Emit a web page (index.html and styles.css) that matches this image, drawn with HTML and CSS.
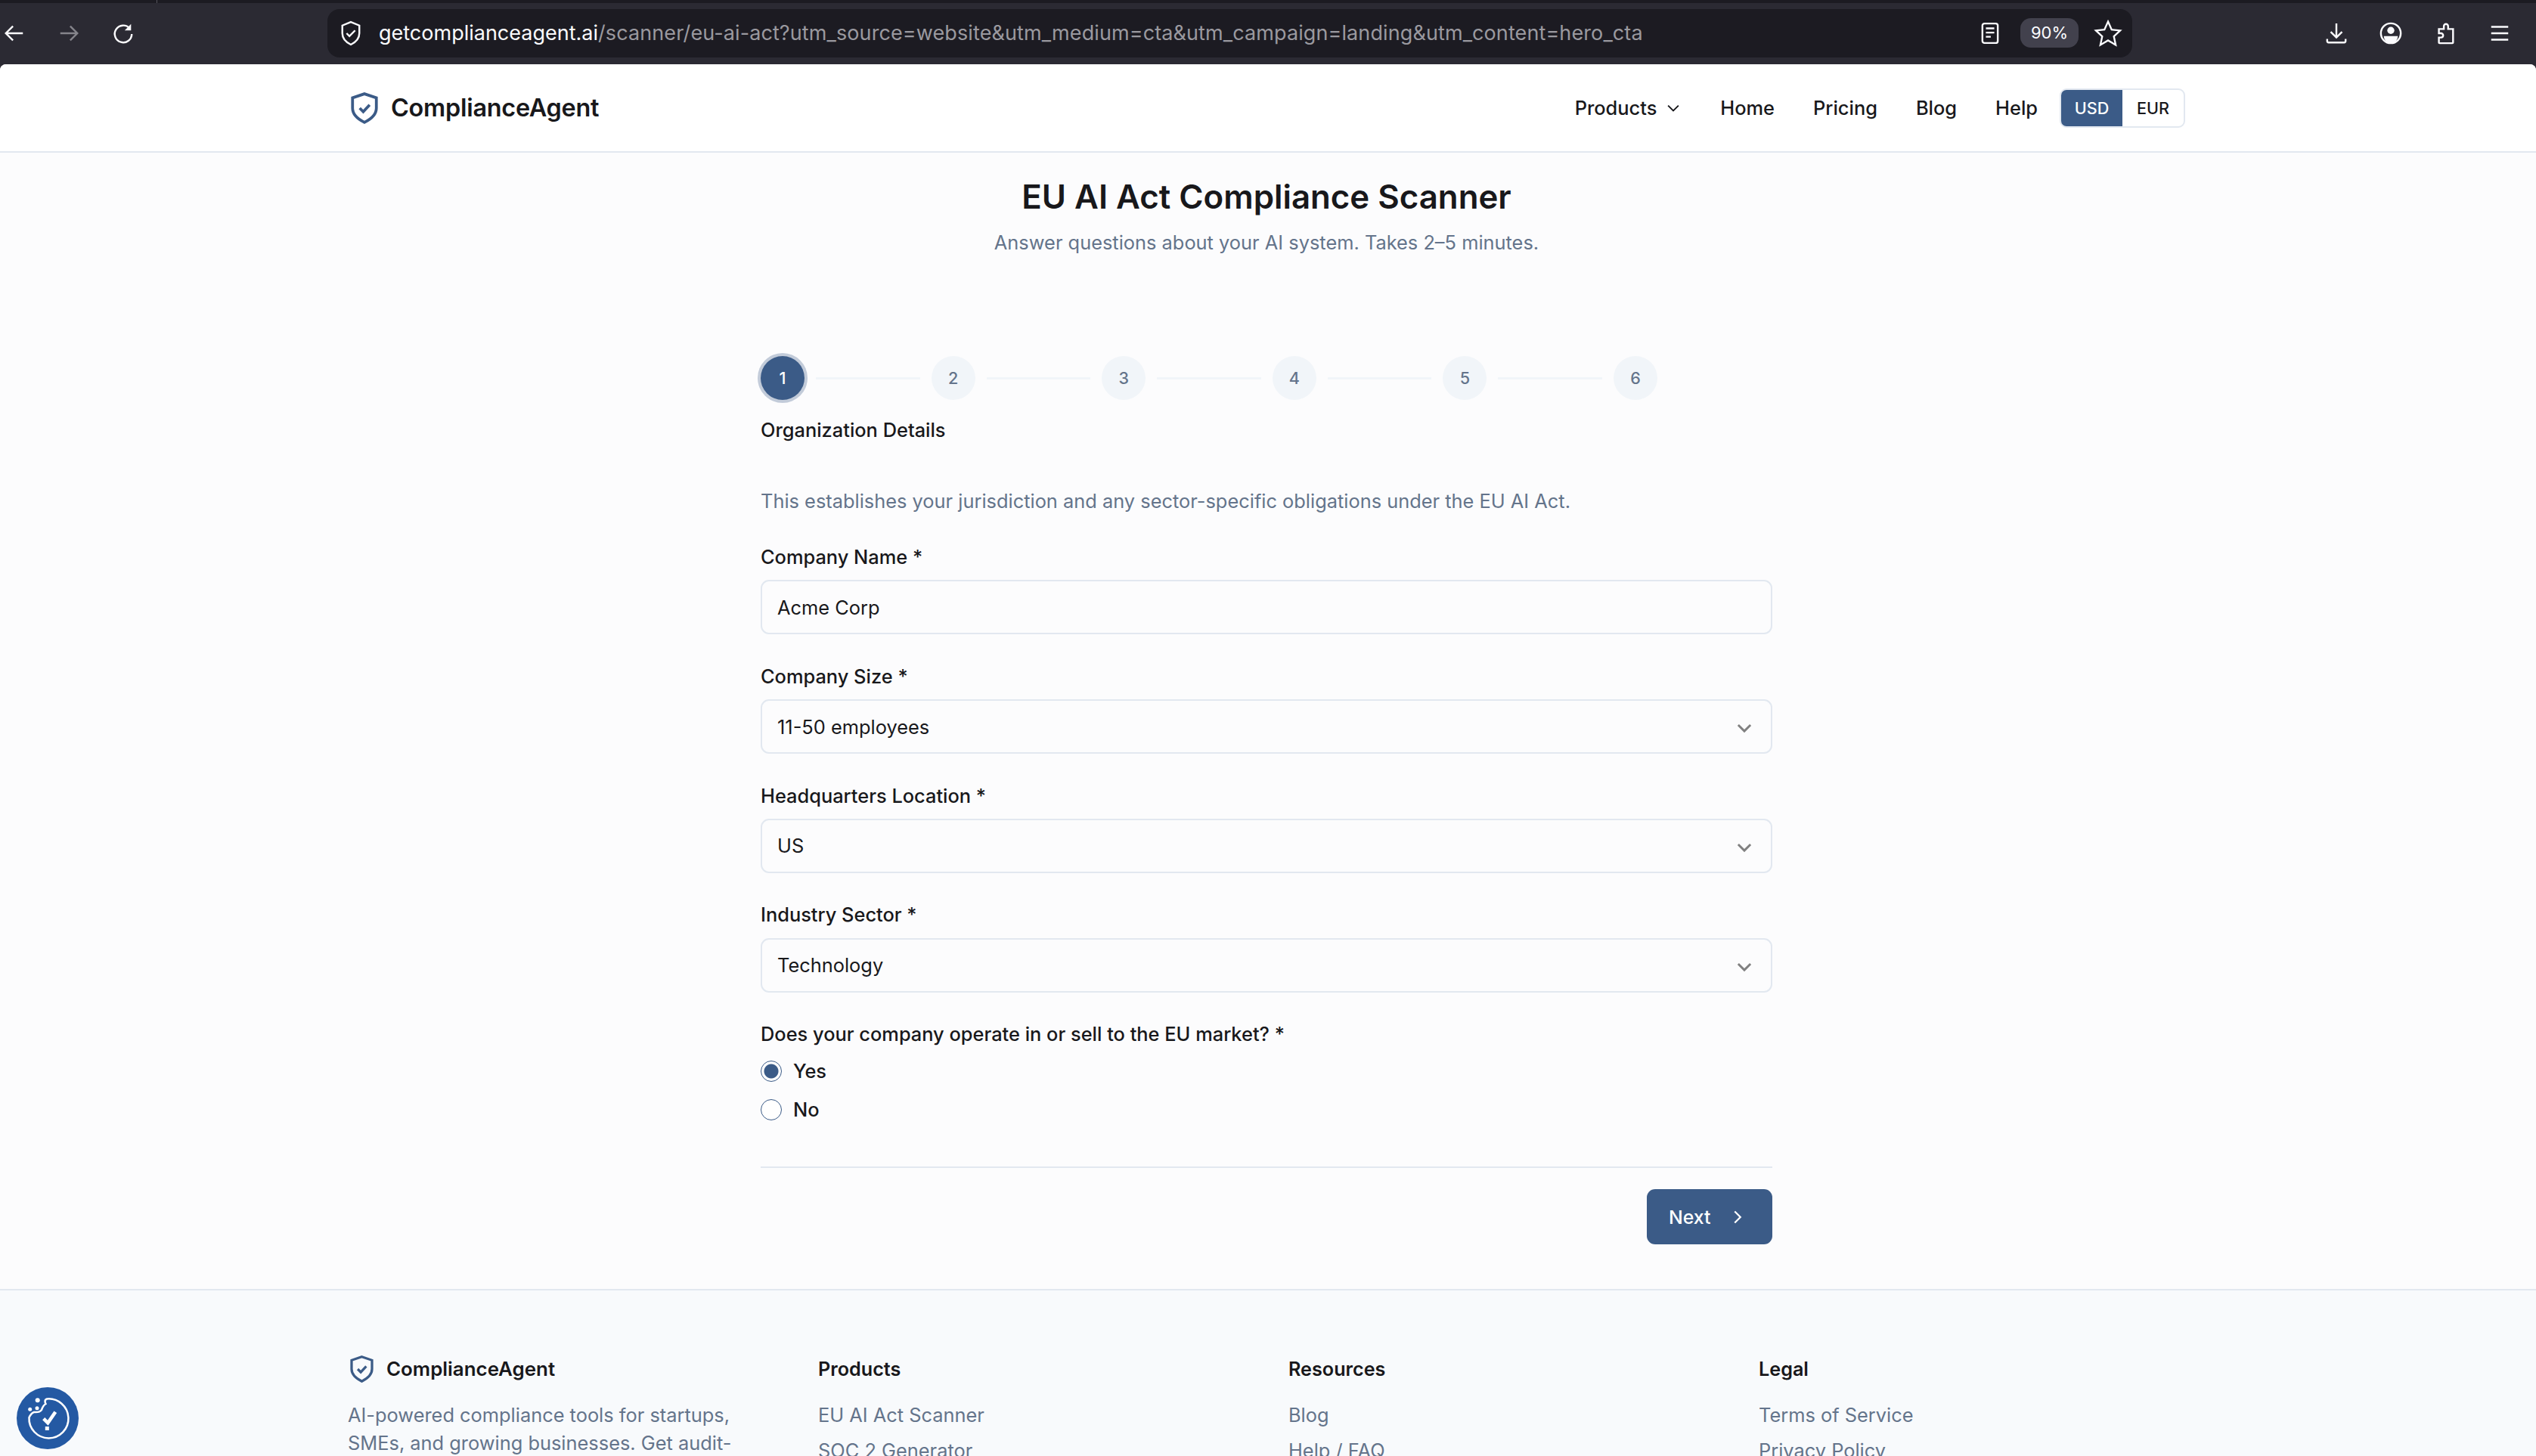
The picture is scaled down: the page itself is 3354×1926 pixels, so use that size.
FILE: index.html
```html
<!DOCTYPE html>
<html lang="en">
<head>
  <meta charset="UTF-8" />
  <title>EU AI Act Compliance Scanner</title>
  <link rel="stylesheet" href="styles.css">
</head>
<body>
  <div class="browser-bar">
    <div class="browser-nav">
      <svg class="tool-icon" viewBox="0 0 32 32"><path d="M28 16H5M14 6L4 16l10 10"/></svg>
      <svg class="tool-icon dim" viewBox="0 0 32 32"><path d="M4 16h23M18 6l10 10-10 10"/></svg>
      <svg class="tool-icon" viewBox="0 0 32 32"><path d="M25 9a12 12 0 1 0 3 8"/><path class="fill" d="M27 3v9h-9z"/></svg>
    </div>
    <div class="url-bar">
      <svg class="url-shield" viewBox="0 0 32 36"><path d="M16 2l12 5v11c0 8-6 13-12 16C10 31 4 26 4 18V7z"/><path d="M10 18l4 4 8-8"/></svg>
      <span class="url-text"><b>getcomplianceagent.ai</b>/scanner/eu-ai-act?utm_source=website&amp;utm_medium=cta&amp;utm_campaign=landing&amp;utm_content=hero_cta</span>
      <svg class="tool-icon small" viewBox="0 0 26 32"><rect x="2" y="2" width="22" height="28" rx="3"/><path d="M7 9h12M7 15h12M7 21h7"/></svg>
      <span class="zoom-pill">90%</span>
      <svg class="tool-icon star" viewBox="0 0 32 32"><path d="M16 3l4 9 9.500 1-7 6.500 2 9.500-8.500-5-8.500 5 2-9.500-7-6.500 9.500-1z"/></svg>
    </div>
    <div class="browser-tools">
      <svg class="tool-icon" viewBox="0 0 32 32"><path d="M16 2v20M8 14l8 8 8-8M3 24v3a2 2 0 0 0 2 2h22a2 2 0 0 0 2-2v-3"/></svg>
      <svg class="tool-icon" viewBox="0 0 32 32"><circle cx="16" cy="16" r="14"/><circle class="fill" cx="16" cy="12" r="5"/><path class="fill" d="M6 20h20a10 10 0 0 1-20 0z"/></svg>
      <svg class="tool-icon" viewBox="0 0 32 32"><path d="M13 30h13a1 1 0 0 0 1-1V10h-7V6a3 3 0 0 0-6 0v4H7v6h3a3 3 0 0 1 0 6H7v7a1 1 0 0 0 1 1z"/></svg>
      <svg class="tool-icon" viewBox="0 0 32 32"><path d="M4 7h24M4 16h24M4 25h24"/></svg>
    </div>
  </div>

  <div class="page">
    <header class="site-header">
      <div class="header-inner">
        <a class="brand">
          <svg class="shield" viewBox="0 0 36 40"><path d="M18 2l15 5v13c0 9-7 14-15 18C10 34 3 29 3 20V7z"/><path d="M12 20l4.500 4.500L24.500 16"/></svg>
          ComplianceAgent
        </a>
        <nav class="site-nav">
          <a>Products <svg class="nav-chevron" viewBox="0 0 16 16"><path d="M3 5.500l5 5 5-5"/></svg></a>
          <a>Home</a>
          <a>Pricing</a>
          <a>Blog</a>
          <a>Help</a>
          <div class="currency">
            <span class="currency-on">USD</span>
            <span>EUR</span>
          </div>
        </nav>
      </div>
    </header>

    <main class="scanner">
      <h1>EU AI Act Compliance Scanner</h1>
      <p class="subtitle">Answer questions about your AI system. Takes 2–5 minutes.</p>

      <form class="scanner-form">
        <div class="stepper">
          <span class="step active">1</span><span class="step-line"></span>
          <span class="step">2</span><span class="step-line"></span>
          <span class="step">3</span><span class="step-line"></span>
          <span class="step">4</span><span class="step-line"></span>
          <span class="step">5</span><span class="step-line"></span>
          <span class="step">6</span>
        </div>
        <div class="step-title">Organization Details</div>
        <p class="step-desc">This establishes your jurisdiction and any sector-specific obligations under the EU AI Act.</p>

        <div class="field">
          <label>Company Name *</label>
          <input class="control" type="text" value="Acme Corp">
        </div>
        <div class="field">
          <label>Company Size *</label>
          <div class="select-wrap">
            <select class="control"><option>11-50 employees</option></select>
            <svg class="select-chevron" viewBox="0 0 16 16"><path d="M3 5.500l5 5 5-5"/></svg>
          </div>
        </div>
        <div class="field">
          <label>Headquarters Location *</label>
          <div class="select-wrap">
            <select class="control"><option>US</option></select>
            <svg class="select-chevron" viewBox="0 0 16 16"><path d="M3 5.500l5 5 5-5"/></svg>
          </div>
        </div>
        <div class="field">
          <label>Industry Sector *</label>
          <div class="select-wrap">
            <select class="control"><option>Technology</option></select>
            <svg class="select-chevron" viewBox="0 0 16 16"><path d="M3 5.500l5 5 5-5"/></svg>
          </div>
        </div>
        <div class="field radios">
          <label>Does your company operate in or sell to the EU market? *</label>
          <div class="radio-row"><span class="radio checked"></span>Yes</div>
          <div class="radio-row"><span class="radio"></span>No</div>
        </div>

        <div class="form-actions">
          <button type="button" class="next-btn">Next <svg class="next-chevron" viewBox="0 0 16 16"><path d="M5.500 3l5 5-5 5"/></svg></button>
        </div>
      </form>
    </main>

    <footer class="site-footer">
      <div class="footer-grid">
        <div>
          <div class="footer-brand">
            <svg class="shield small" viewBox="0 0 36 40"><path d="M18 2l15 5v13c0 9-7 14-15 18C10 34 3 29 3 20V7z"/><path d="M12 20l4.500 4.500L24.500 16"/></svg>
            ComplianceAgent
          </div>
          <p class="footer-about">AI-powered compliance tools for startups, SMEs, and growing businesses. Get audit-ready documents in minutes.</p>
        </div>
        <div class="footer-col">
          <h4>Products</h4>
          <a>EU AI Act Scanner</a>
          <a>SOC 2 Generator</a>
        </div>
        <div class="footer-col">
          <h4>Resources</h4>
          <a>Blog</a>
          <a>Help / FAQ</a>
        </div>
        <div class="footer-col">
          <h4>Legal</h4>
          <a>Terms of Service</a>
          <a>Privacy Policy</a>
        </div>
      </div>
    </footer>
  </div>

  <div class="cookie-badge">
    <svg viewBox="0 0 82 82">
      <path class="cookie-outline" d="M16.500 40A26 26 0 1 0 40 15.500C36 17 38 21 38.500 22C35 24 34 27 33 30C30 34 26 33 23 33C20 34 18 37 16.500 40z"/>
      <circle class="cookie-dot" cx="27.700" cy="17.300" r="3"/>
      <circle class="cookie-dot" cx="27" cy="27.700" r="2.500"/>
      <circle class="cookie-dot" cx="17.700" cy="29.300" r="2.500"/>
      <path class="cookie-check" d="M35.700 41.700l5.600 5.600 10-14.600"/>
      <rect class="cookie-dot" x="37.800" y="52" width="5" height="5"/>
    </svg>
  </div>
</body>
</html>
```

FILE: styles.css
```css
:root {
  --brand: #3b5b87;
  --ink: #18181b;
  --muted: #64748b;
  --line: #e2e8f0;
  --page-bg: #fcfcfd;
  --footer-bg: #f8fafc;
}

* {
  box-sizing: border-box;
}

html, body {
  height: 100%;
  overflow: hidden;
}

body {
  margin: 0;
  font-family: Inter, "Noto Sans", sans-serif;
  font-size: 25.4px;
  color: var(--ink);
  background: #2b2a33;
}

a {
  color: inherit;
  text-decoration: none;
}

/* browser toolbar */
.browser-bar {
  position: relative;
  height: 85px;
  display: flex;
  align-items: center;
  background: #2b2a33;
  border-top: 4px solid #1c1b22;
  padding-bottom: 2px;
}

.browser-bar::before {
  content: "";
  position: absolute;
  left: 207px;
  top: -4px;
  width: 1px;
  height: 4px;
  background: #55545c;
}

.tool-icon {
  width: 30px;
  height: 30px;
  flex: none;
  fill: none;
  stroke: #fbfbfe;
  stroke-width: 2.600;
}

.tool-icon .fill {
  fill: #fbfbfe;
  stroke: none;
}

.tool-icon.dim {
  stroke: #85848b;
}

.tool-icon.small {
  width: 24px;
  height: 30px;
}

.tool-icon.star {
  width: 38px;
  height: 38px;
  margin: 0 -3px 0 -3px;
  stroke-width: 2;
}

.browser-nav {
  display: flex;
  width: 433px;
  padding-left: 4px;
  gap: 42px;
}

.url-bar {
  width: 2387px;
  height: 64px;
  display: flex;
  align-items: center;
  padding: 0 16px 0 16px;
  background: #1c1b22;
  border-radius: 16px;
}

.url-shield {
  width: 30px;
  height: 34px;
  fill: none;
  stroke: #fbfbfe;
  stroke-width: 2.600;
  flex: none;
}

.url-text {
  flex: 1;
  margin-left: 22px;
  font-size: 27px;
  letter-spacing: 0.1px;
  color: #9a999f;
  white-space: nowrap;
}

.url-text b {
  font-weight: 400;
  letter-spacing: 0;
  color: #fbfbfe;
}

.zoom-pill {
  margin: 0 23px 0 28px;
  width: 77px;
  height: 39px;
  line-height: 39px;
  text-align: center;
  font-size: 22px;
  color: #fbfbfe;
  background: #42414d;
  border-radius: 14px;
}

.browser-tools {
  flex: 1;
  display: flex;
  justify-content: flex-end;
  gap: 42px;
  padding-right: 33px;
}

/* page */
.page {
  height: calc(100% - 85px);
  overflow: hidden;
  background: var(--page-bg);
  border-top-left-radius: 8px;
  border-top-right-radius: 8px;
}

.site-header,
.scanner,
.site-footer {
  padding-right: 4px;
}

.site-header {
  height: 117px;
  background: #fff;
  border-bottom: 2px solid var(--line);
}

.header-inner {
  width: 2430px;
  height: 100%;
  margin: 0 auto;
  display: flex;
  align-items: center;
  justify-content: space-between;
}

.brand {
  display: flex;
  align-items: center;
  gap: 16px;
  padding-left: 3px;
  font-size: 32.400px;
  font-weight: 600;
  letter-spacing: -0.25px;
}

.shield {
  width: 38px;
  height: 42px;
  fill: none;
  stroke: var(--brand);
  stroke-width: 3.600;
}

.shield.small {
  width: 33px;
  height: 36px;
}

.site-nav {
  display: flex;
  align-items: center;
  gap: 51px;
  font-weight: 500;
}

.site-nav a {
  display: flex;
  align-items: center;
  gap: 11px;
}

.nav-chevron {
  width: 22px;
  height: 22px;
  fill: none;
  stroke: var(--ink);
  stroke-width: 1.400;
}

.currency {
  display: flex;
  height: 52px;
  margin-left: -22px;
  border: 2px solid var(--line);
  border-radius: 9px;
  overflow: hidden;
  font-size: 21.600px;
}

.currency span {
  width: 81px;
  line-height: 48px;
  text-align: center;
}

.currency .currency-on {
  background: var(--brand);
  color: #fff;
}

/* scanner form */
.scanner {
  height: 1503px;
  padding-top: 30px;
}

h1 {
  margin: 0;
  text-align: center;
  font-size: 43.800px;
  line-height: 58px;
  font-weight: 600;
}

.subtitle {
  margin: 14px 0 0;
  text-align: center;
  color: var(--muted);
  line-height: 34px;
}

.scanner-form {
  width: 1338px;
  margin: 133px auto 0;
}

.stepper {
  width: 1186px;
  display: flex;
  align-items: center;
  gap: 15px;
}

.step {
  width: 58px;
  height: 58px;
  flex: none;
  display: flex;
  align-items: center;
  justify-content: center;
  border-radius: 50%;
  background: #f1f5f9;
  color: var(--muted);
  font-size: 21.600px;
  font-weight: 500;
}

.step.active {
  background: var(--brand);
  color: #fff;
  box-shadow: 0 0 0 4px rgba(59, 91, 135, 0.3);
}

.step-line {
  flex: 1;
  height: 3px;
  background: #f1f5f9;
}

.step-title {
  margin-top: 22px;
  line-height: 36px;
  font-weight: 500;
}

.step-desc {
  margin: 58px 0 0;
  line-height: 36px;
  color: var(--muted);
}

.field {
  margin-top: 38px;
}

.field + .field {
  margin-top: 37.400px;
}

.field label {
  display: block;
  line-height: 36px;
  font-weight: 500;
  margin-bottom: 12.400px;
}

.radios label {
  margin-bottom: 5px;
}

.control {
  display: block;
  width: 100%;
  height: 72px;
  padding: 0 20px;
  background: var(--page-bg);
  border: 2px solid var(--line);
  border-radius: 11px;
  font-family: inherit;
  font-size: 25.400px;
  color: var(--ink);
  appearance: none;
}

.select-wrap {
  position: relative;
}

.select-chevron {
  position: absolute;
  right: 24px;
  top: 25px;
  width: 26px;
  height: 26px;
  fill: none;
  stroke: #808080;
  stroke-width: 1.800;
}

.radio-row {
  display: flex;
  align-items: center;
  gap: 15px;
  height: 51px;
  font-weight: 500;
}

.radio {
  width: 28px;
  height: 28px;
  border: 1.500px solid var(--brand);
  border-radius: 50%;
  background: #fff;
}

.radio.checked {
  background: radial-gradient(circle, var(--brand) 0 9px, #fff 10px);
}

.form-actions {
  display: flex;
  justify-content: flex-end;
  margin-top: 50px;
  padding-top: 28px;
  border-top: 2px solid var(--line);
}

.next-btn {
  width: 166px;
  height: 73px;
  display: flex;
  align-items: center;
  gap: 24px;
  padding: 0 0 0 29px;
  border: none;
  border-radius: 11px;
  background: var(--brand);
  color: #fff;
  font-family: inherit;
  font-size: 24.800px;
  font-weight: 500;
}

.next-chevron {
  width: 24px;
  height: 24px;
  fill: none;
  stroke: #fff;
  stroke-width: 1.500;
}

/* footer */
.site-footer {
  background: var(--footer-bg);
  border-top: 2px solid var(--line);
  padding-top: 86px;
}

.footer-grid {
  width: 2430px;
  margin: 0 auto;
  display: grid;
  grid-template-columns: repeat(4, 1fr);
  gap: 58px;
}

.footer-brand {
  display: flex;
  align-items: center;
  gap: 16px;
  padding-left: 2px;
  line-height: 36px;
  font-size: 25.900px;
  font-weight: 600;
}

.footer-about {
  margin: 24px 0 0;
  line-height: 37px;
  color: var(--muted);
}

.footer-col h4 {
  margin: 0 0 24px;
  line-height: 36px;
  font-size: 25.200px;
  font-weight: 600;
}

.footer-col a {
  display: block;
  line-height: 37px;
  margin-bottom: 10px;
  color: var(--muted);
}

.cookie-badge {
  position: fixed;
  left: 22px;
  top: 1835px;
  width: 82px;
  height: 82px;
  border-radius: 50%;
  background: #2459a3;
}

.cookie-badge svg {
  display: block;
}

.cookie-outline {
  fill: none;
  stroke: #fff;
  stroke-width: 2.500;
}

.cookie-check {
  fill: none;
  stroke: #fff;
  stroke-width: 4.500;
}

.cookie-dot {
  fill: #fff;
}
```
